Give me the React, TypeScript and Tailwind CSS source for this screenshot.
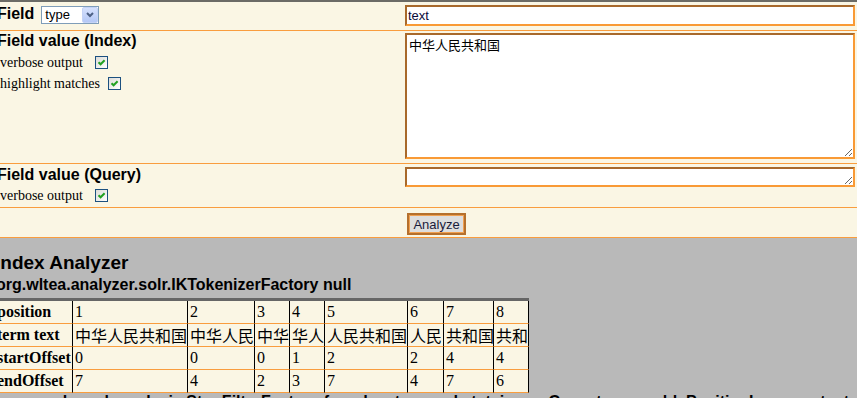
import React from "react";

const sans = "font-['Liberation_Sans',Arial,'Noto_Sans_CJK_SC',sans-serif]";
const serif = "font-['Liberation_Serif','Times_New_Roman','Noto_Sans_CJK_SC',serif]";
const cjk = "font-['Noto_Sans_CJK_SC',sans-serif]";

const inputBorder =
  "border-2 border-t-[#a8692b] border-l-[#a8692b] border-b-[#f99a35] border-r-[#f99a35] bg-white outline-none";

function Check() {
  return (
    <span className="inline-flex h-[13px] w-[13px] items-center justify-center border border-[#1c5180] bg-gradient-to-br from-[#dcdcd7] to-white">
      <svg viewBox="0 0 11 11" className="h-[11px] w-[11px]">
        <path d="M2.5 5.2 L4.6 7.3 L8.6 3.2" stroke="#21a121" strokeWidth="2" fill="none" />
      </svg>
    </span>
  );
}

function TypeSelect() {
  return (
    <div className="ml-[7px] mt-[1px] flex h-[18px] w-[58px] items-center border border-[#7f9db9] bg-white">
      <span className={`${sans} flex-1 pl-[3px] text-[13px] leading-[16px] text-black`}>type</span>
      <span className="flex h-[16px] w-[16px] items-center justify-center rounded-[2px] border border-[#c4d3f6] bg-gradient-to-b from-[#d6e1fd] to-[#b4c8f6]">
        <svg viewBox="0 0 8 6" className="h-[6px] w-[8px]">
          <path d="M1 1 L4 4 L7 1" stroke="#4d6185" strokeWidth="2" fill="none" />
        </svg>
      </span>
    </div>
  );
}

const columns = [
  { label: "position", values: ["1", "2", "3", "4", "5", "6", "7", "8"] },
  {
    label: "term text",
    values: ["中华人民共和国", "中华人民", "中华", "华人", "人民共和国", "人民", "共和国", "共和"],
  },
  { label: "startOffset", values: ["0", "0", "0", "1", "2", "2", "4", "4"] },
  { label: "endOffset", values: ["7", "4", "2", "3", "7", "4", "7", "6"] },
];

export default function App() {
  return (
    <div className="h-[398px] w-[857px] overflow-hidden bg-[#b9b9b9] text-black">
      <div className="h-[2px] bg-[#6b6b66]" />
      <div className="bg-[#faf6e4]">
        {/* field name */}
        <div className="flex h-[29px] border-b border-[#f99d3e]">
          <div className="flex w-[405px] items-start pt-[3px]">
            <span className={`${sans} -ml-[3px] text-[16px] font-bold leading-[18px]`}>Field</span>
            <TypeSelect />
          </div>
          <div className="flex-1 pr-[2px] pt-[3px]">
            <input
              readOnly
              value="text"
              className={`${inputBorder} ${sans} block h-[21px] w-[450px] px-[1px] text-[13px] text-[#0a0a3a]`}
            />
          </div>
        </div>

        {/* index value */}
        <div className="flex h-[133px] border-b border-[#f99d3e]">
          <div className="w-[405px]">
            <div className={`${sans} -ml-[3px] text-[16px] font-bold leading-[20px]`}>Field value (Index)</div>
            <div className={`${serif} mt-[1px] flex h-[21px] items-center gap-[12px] text-[14px]`}>
              <span>verbose output</span>
              <Check />
            </div>
            <div className={`${serif} flex h-[21px] items-center gap-[8px] text-[14px]`}>
              <span>highlight matches</span>
              <Check />
            </div>
          </div>
          <div className="flex-1 pr-[2px] pt-[2px]">
            <textarea
              readOnly
              value="中华人民共和国"
              className={`${inputBorder} ${cjk} block h-[126px] w-[450px] p-[2px] text-[13px] leading-[16px]`}
            />
          </div>
        </div>

        {/* query value */}
        <div className="flex h-[44px] border-b border-[#f99d3e]">
          <div className="w-[405px] pt-[1px]">
            <div className={`${sans} -ml-[3px] text-[16px] font-bold leading-[20px]`}>Field value (Query)</div>
            <div className={`${serif} flex h-[21px] items-center gap-[12px] text-[14px]`}>
              <span>verbose output</span>
              <Check />
            </div>
          </div>
          <div className="flex-1 pr-[2px] pt-[3px]">
            <textarea readOnly value="" className={`${inputBorder} block h-[20px] w-[450px] p-[1px] text-[13px]`} />
          </div>
        </div>

        {/* submit */}
        <div className="flex h-[30px] border-b border-[#f99d3e]">
          <div className="w-[405px]" />
          <div className="flex-1 pt-[3px]">
            <button
              className={`${sans} ml-[2px] h-[22px] w-[59px] border-2 border-[#b5702d] bg-[#dedede] text-[13px] text-[#1a1a3a] shadow-[inset_0_0_0_1px_#f0a050]`}
            >
              Analyze
            </button>
          </div>
        </div>
      </div>

      {/* analysis output */}
      <div className="pt-[14px]">
        <h2 className={`${sans} -ml-[5px] text-[19px] font-bold leading-[22px]`}>Index Analyzer</h2>
        <h4 className={`${sans} -ml-[4px] mt-[2px] text-[16px] font-bold leading-[18px]`}>
          org.wltea.analyzer.solr.IKTokenizerFactory null
        </h4>

        <div className="-ml-[4px] mt-[4px] grid w-[533px] grid-cols-[76px_115px_67px_35px_35px_83px_36px_50px_36px] border-t-[3px] border-[#666666] bg-[#faf6e4]">
          {columns.map((row) => (
            <React.Fragment key={row.label}>
              <div className={`${serif} h-[23px] border-b border-[#f99d3e] pl-[1px] text-[16px] font-bold leading-[22px] whitespace-nowrap`}>
                {row.label}
              </div>
              {row.values.map((v, i) => (
                <div
                  key={i}
                  className={`${row.label === "term text" ? cjk : serif} h-[23px] overflow-hidden whitespace-nowrap border-b border-l border-b-[#f99d3e] border-l-black pl-[2px] text-[16px] leading-[22px] ${
                    i === row.values.length - 1 ? "border-r border-r-black" : ""
                  }`}
                >
                  {v}
                </div>
              ))}
            </React.Fragment>
          ))}
        </div>

        <h4 className={`${sans} -ml-[4px] text-[16px] font-bold leading-[18px] whitespace-nowrap`}>
          org.apache.solr.analysis.StopFilterFactory {"{words=stopwords.txt, ignoreCase=true, enablePositionIncrements=true}"}
        </h4>
      </div>
    </div>
  );
}
